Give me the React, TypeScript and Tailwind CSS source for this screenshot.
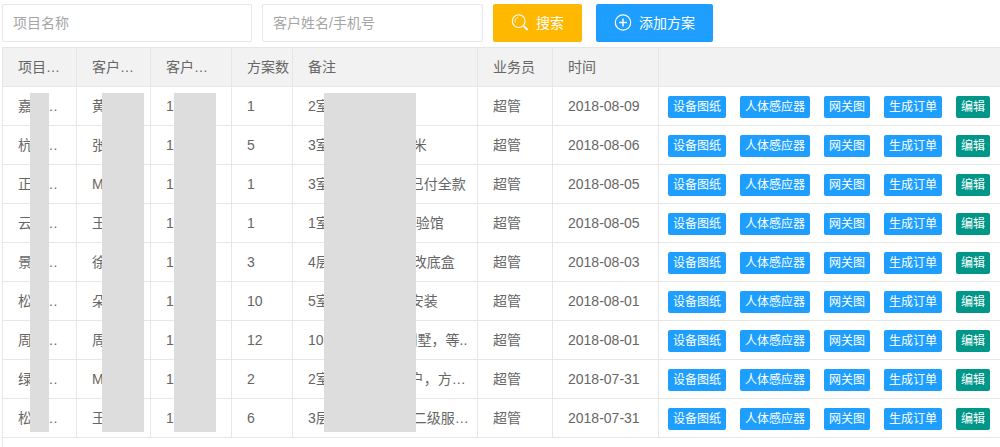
import { clsx } from "clsx";

type Project = {
  name: string;
  customer: string;
  plans: number;
  remark: { head: string; gap: string; tail: string };
  date: string;
};

const projects: Project[] = [
  { name: "嘉", customer: "黄", plans: 1, remark: { head: "2室", gap: "w-20", tail: "" }, date: "2018-08-09" },
  { name: "杭", customer: "张", plans: 5, remark: { head: "3室", gap: "w-[83px]", tail: "米" }, date: "2018-08-06" },
  { name: "正", customer: "M", plans: 1, remark: { head: "3室", gap: "w-20", tail: "已付全款" }, date: "2018-08-05" },
  { name: "云", customer: "王", plans: 1, remark: { head: "1室", gap: "w-[86px]", tail: "验馆" }, date: "2018-08-05" },
  { name: "景", customer: "徐", plans: 3, remark: { head: "4层", gap: "w-[83px]", tail: "改底盒" }, date: "2018-08-03" },
  { name: "松", customer: "朵", plans: 10, remark: { head: "5室", gap: "w-20", tail: "安装" }, date: "2018-08-01" },
  { name: "周", customer: "周", plans: 12, remark: { head: "10", gap: "w-20", tail: "别墅，等.." }, date: "2018-08-01" },
  { name: "绿", customer: "M", plans: 2, remark: { head: "2室", gap: "w-20", tail: "户，方…" }, date: "2018-07-31" },
  { name: "松", customer: "王", plans: 6, remark: { head: "3层", gap: "w-[83px]", tail: "二级服…" }, date: "2018-07-31" },
];

const columns = [
  { title: "项目…", width: "w-[74px]" },
  { title: "客户…", width: "w-[74px]" },
  { title: "客户…", width: "w-[81px]" },
  { title: "方案数", width: "w-[61px]" },
  { title: "备注", width: "w-[185px]" },
  { title: "业务员", width: "w-[75px]" },
  { title: "时间", width: "w-[106px]" },
  { title: "", width: "w-auto" },
];

const actions = ["设备图纸", "人体感应器", "网关图", "生成订单"];

const masks = [
  "left-[27px] w-[19px]",
  "left-[99px] w-[42px]",
  "left-[171px] w-[42px]",
  "left-[321px] w-[92px]",
];

const cell = "h-[39px] border-r border-b border-[#e6e6e6] pl-[15px] text-left font-normal whitespace-nowrap";

function SearchIcon() {
  return (
    <svg className="size-[18px]" viewBox="0 0 18 18" fill="none" stroke="currentColor" strokeLinecap="round" aria-hidden="true">
      <circle cx="7.7" cy="7.1" r="6.4" strokeWidth="1.1" />
      <path d="M4.2 8.1A3.8 3.8 0 0 1 6.8 3.5" strokeWidth="0.9" />
      <path d="M12.3 11.7l1.2 1.2" strokeWidth="1" />
      <path d="M13.6 13l2.4 2.2" strokeWidth="2.2" />
    </svg>
  );
}

function AddIcon() {
  return (
    <svg className="size-[18px]" viewBox="0 0 18 18" fill="none" stroke="currentColor" aria-hidden="true">
      <circle cx="9" cy="8.5" r="7.7" strokeWidth="1.2" />
      <path d="M9 4.5v8M5 8.5h8" strokeWidth="1.4" />
    </svg>
  );
}

function Toolbar() {
  const input = "h-[38px] rounded-xs border border-[#e6e6e6] bg-white px-[10px] placeholder:text-[#a5a5a5] outline-none";
  const button = "flex h-[38px] items-center gap-[7px] rounded-xs px-[18px] text-white";

  return (
    <form className="flex pt-1 pb-[5px]" onSubmit={(e) => e.preventDefault()}>
      <input className={clsx(input, "mr-[10px] w-[250px]")} type="text" aria-label="项目名称" placeholder="项目名称" />
      <input className={clsx(input, "mr-[10px] w-[221px]")} type="text" aria-label="客户姓名/手机号" placeholder="客户姓名/手机号" />
      <button type="submit" className={clsx(button, "mr-[14px] bg-[#ffb800]")}>
        <SearchIcon />
        搜索
      </button>
      <button type="button" className={clsx(button, "bg-[#1e9fff]")}>
        <AddIcon />
        添加方案
      </button>
    </form>
  );
}

function ProjectRow({ project }: { project: Project }) {
  const { head, gap, tail } = project.remark;
  const button = "h-[22px] rounded-xs px-[5px] text-xs leading-[22px] text-white";

  return (
    <tr>
      <td className={cell}>
        {project.name}
        <span className="inline-block w-3" />…
      </td>
      <td className={cell}>{project.customer}</td>
      <td className={cell}>1</td>
      <td className={cell}>{project.plans}</td>
      <td className={cell}>
        {head}
        <span className={clsx("inline-block", gap)} />
        {tail}
      </td>
      <td className={cell}>超管</td>
      <td className={cell}>{project.date}</td>
      <td className="border-b border-[#e6e6e6] pt-[2px] pl-[9px]">
        <div className="flex gap-[14px] whitespace-nowrap">
          {actions.map((action) => (
            <button key={action} type="button" className={clsx(button, "bg-[#1e9fff]")}>
              {action}
            </button>
          ))}
          <button type="button" className={clsx(button, "bg-[#009688]")}>
            编辑
          </button>
        </div>
      </td>
    </tr>
  );
}

export default function App() {
  return (
    <div className="flex min-h-screen flex-col bg-white pl-[2px] font-['Liberation_Sans','Noto_Sans_CJK_SC',sans-serif] text-sm leading-5 text-[#666]">
      <Toolbar />

      <main className="flex-1 border-t border-l border-[#e6e6e6]">
        <div className="relative">
          <table className="w-full table-fixed border-separate border-spacing-0">
            <thead className="bg-[#f2f2f2]">
              <tr>
                {columns.map(({ title, width }, i) => (
                  <th key={i} scope="col" className={clsx(cell, width, i === columns.length - 1 && "border-r-0")}>
                    {title}
                  </th>
                ))}
              </tr>
            </thead>
            <tbody>
              {projects.map((project, i) => (
                <ProjectRow key={i} project={project} />
              ))}
            </tbody>
          </table>
          {masks.map((mask) => (
            <div key={mask} className={clsx("absolute top-[45px] bottom-[6px] bg-[#ddd]", mask)} />
          ))}
        </div>
      </main>
    </div>
  );
}
